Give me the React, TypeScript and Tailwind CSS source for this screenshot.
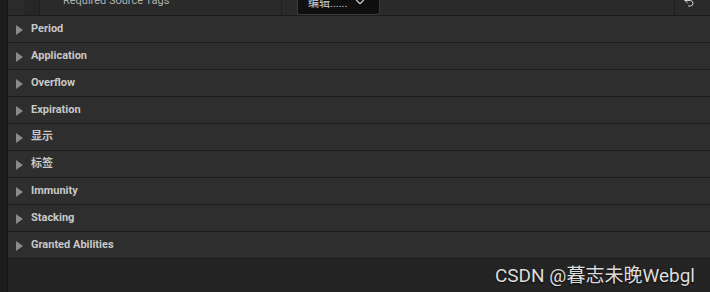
import { ChevronDown, Undo2 } from 'lucide-react';

const SECTIONS = [
  'Period',
  'Application',
  'Overflow',
  'Expiration',
  '显示',
  '标签',
  'Immunity',
  'Stacking',
  'Granted Abilities',
];

const font = 'font-["Roboto","Noto_Sans_CJK_SC",sans-serif]';

function SectionRow({ label }: { label: string }) {
  return (
    <div className="flex h-[27px] items-center border-b border-[#1b1b1b] bg-[#2e2e2e]">
      <svg width="7" height="10" viewBox="0 0 7 10" className="ml-[8px] mr-[8px] mt-[1px]">
        <path d="M0 0 L7 5 L0 10 Z" fill="#8a8a8a" />
      </svg>
      <span className="text-[11px] font-bold text-[#c8c8c8]">{label}</span>
    </div>
  );
}

export default function App() {
  return (
    <div className={`relative flex h-[292px] w-[710px] overflow-hidden bg-[#242424] ${font}`}>
      {/* left gutter */}
      <div className="w-[8px] shrink-0 border-r border-[#141414] bg-[#1d1d1d]" />

      <div className="flex flex-1 flex-col">
        {/* partially scrolled-out property row */}
        <div className="flex h-[16px] overflow-hidden border-b border-[#1b1b1b] bg-[#2a2a2a]">
          <div className="w-[16px] shrink-0 bg-[#2b2b2b]" />
          <div className="w-[16px] shrink-0 border-r border-[#1f1f1f] bg-[#262626]" />
          <div className="flex w-[242px] shrink-0 items-start border-r border-[#1f1f1f]">
            <span className="-mt-[7px] ml-[23px] text-[11px] text-[#b0b0b0]">Required Source Tags</span>
          </div>
          <div className="flex flex-1 items-start pl-[15px]">
            <div className="flex h-[15px] w-[83px] items-start gap-[6px] rounded-b-[3px] border border-t-0 border-[#3a3a3a] bg-[#0f0f0f] pl-[10px]">
              <span className="-mt-[4px] text-[11px] text-[#cfcfcf]">编辑......</span>
              <ChevronDown size={14} strokeWidth={2} className="-mt-[5px] text-[#cfcfcf]" />
            </div>
          </div>
          <div className="flex w-[36px] shrink-0 items-start justify-center border-l border-[#1f1f1f]">
            <Undo2 size={12} strokeWidth={2} className="-mt-[4px] -ml-[8px] text-[#cfcfcf]" />
          </div>
        </div>

        {SECTIONS.map((s) => (
          <SectionRow key={s} label={s} />
        ))}
        <div className="flex-1 bg-[#242424]" />
      </div>

      <div className="absolute bottom-[7px] right-[15px] text-[19px] leading-none text-[#dcdcdc] [text-shadow:0_1px_2px_rgba(0,0,0,0.8)]">
        CSDN @暮志未晚Webgl
      </div>
    </div>
  );
}
